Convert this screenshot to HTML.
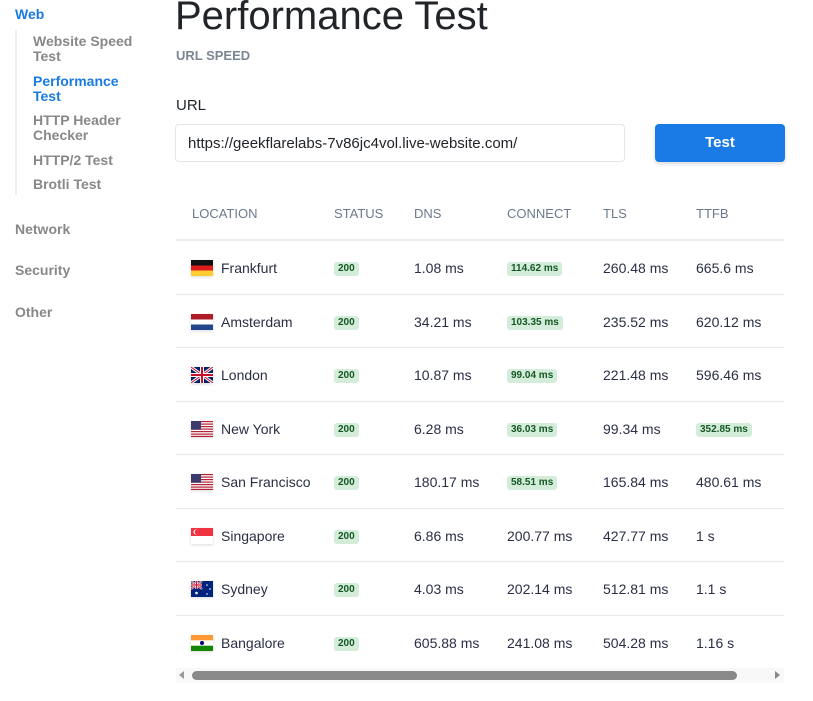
<!DOCTYPE html>
<html><head><meta charset="utf-8"><style>
*{box-sizing:border-box;margin:0;padding:0}
body{width:813px;height:701px;background:#fff;font-family:"Liberation Sans",sans-serif;color:#212529;position:relative;overflow:hidden}
.a{position:absolute;white-space:nowrap}
.sb{font-size:14px;font-weight:bold;color:#888;line-height:15px}
.badge{position:absolute;white-space:nowrap;background:#d4edda;color:#155724;font-weight:bold;font-size:10px;padding:2px 4px;border-radius:3px;line-height:10px}
.cell{font-size:14px;color:#2a2f45}
.hd{font-size:13px;color:#6c7a8c;font-weight:normal}
.line{position:absolute;left:176px;width:608px;height:1px;background:#e8e8e8}
.flag{position:absolute;left:191px;width:22px;height:16px;box-shadow:0 1px 3px rgba(0,0,0,.15)}
</style></head><body>
<div class="a" style="left:15px;top:6px;font-size:14px;font-weight:bold;color:#1a7be0">Web</div>
<div class="a" style="left:15px;top:30px;width:2px;height:165px;background:#eee"></div>
<div class="a sb" style="left:33px;top:34px">Website Speed<br>Test</div>
<div class="a sb" style="left:33px;top:74px;color:#1a7be0">Performance<br>Test</div>
<div class="a sb" style="left:33px;top:113px">HTTP Header<br>Checker</div>
<div class="a sb" style="left:33px;top:153px">HTTP/2 Test</div>
<div class="a sb" style="left:33px;top:177px">Brotli Test</div>
<div class="a sb" style="left:15px;top:222px">Network</div>
<div class="a sb" style="left:15px;top:263px">Security</div>
<div class="a sb" style="left:15px;top:305px">Other</div>

<div class="a" style="left:175px;top:-6px;font-size:40px;color:#212529">Performance Test</div>
<div class="a" style="left:176px;top:48px;font-size:13px;font-weight:bold;color:#7a8694">URL SPEED</div>
<div class="a" style="left:176px;top:97px;font-size:15px">URL</div>
<div class="a" style="left:175px;top:124px;width:450px;height:38px;border:1px solid #e6e6e6;border-radius:4px;font-size:15px;padding:10px 12px;color:#212529">https://geekflarelabs-7v86jc4vol.live-website.com/</div>
<div class="a" style="left:655px;top:124px;width:130px;height:38px;background:#1a7be6;border-radius:4px;color:#fff;font-weight:bold;font-size:15px;text-align:center;line-height:38px;box-shadow:0 2px 4px rgba(0,0,0,.15)">Test</div>

<div class="a hd" style="left:192px;top:206px">LOCATION</div>
<div class="a hd" style="left:334px;top:206px">STATUS</div>
<div class="a hd" style="left:414px;top:206px">DNS</div>
<div class="a hd" style="left:507px;top:206px">CONNECT</div>
<div class="a hd" style="left:603px;top:206px">TLS</div>
<div class="a hd" style="left:696px;top:206px">TTFB</div>
<div class="line" style="top:239px;height:2px;background:#eee"></div>

<div class="flag" style="top:260px;background:linear-gradient(#111 33%,#dd1c1c 33% 66%,#fc3 66%)"></div>
<div class="flag" style="top:314px;background:linear-gradient(#ae1c28 33%,#fff 33% 66%,#21468b 66%)"></div>
<svg class="flag" style="top:367px" viewBox="0 0 22 16"><rect width="22" height="16" fill="#012169"/><path d="M0 0L22 16M22 0L0 16" stroke="#fff" stroke-width="3"/><path d="M0 0L22 16M22 0L0 16" stroke="#c8102e" stroke-width="1"/><path d="M11 0V16M0 8H22" stroke="#fff" stroke-width="4"/><path d="M11 0V16M0 8H22" stroke="#c8102e" stroke-width="2"/></svg>
<svg class="flag" style="top:421px" viewBox="0 0 22 16"><rect width="22" height="16" fill="#fff"/><g fill="#b22234"><rect y="0" width="22" height="1.2"/><rect y="2.5" width="22" height="1.2"/><rect y="5" width="22" height="1.2"/><rect y="7.5" width="22" height="1.2"/><rect y="10" width="22" height="1.2"/><rect y="12.5" width="22" height="1.2"/><rect y="14.8" width="22" height="1.2"/></g><rect width="10" height="8.7" fill="#3c3b6e"/></svg>
<svg class="flag" style="top:474px" viewBox="0 0 22 16"><rect width="22" height="16" fill="#fff"/><g fill="#b22234"><rect y="0" width="22" height="1.2"/><rect y="2.5" width="22" height="1.2"/><rect y="5" width="22" height="1.2"/><rect y="7.5" width="22" height="1.2"/><rect y="10" width="22" height="1.2"/><rect y="12.5" width="22" height="1.2"/><rect y="14.8" width="22" height="1.2"/></g><rect width="10" height="8.7" fill="#3c3b6e"/></svg>
<svg class="flag" style="top:528px" viewBox="0 0 22 16"><rect width="22" height="16" fill="#fff"/><rect width="22" height="8" fill="#ef3340"/><circle cx="5" cy="4" r="2.5" fill="#fff"/><circle cx="6" cy="4" r="2.3" fill="#ef3340"/></svg>
<svg class="flag" style="top:581px" viewBox="0 0 22 16"><rect width="22" height="16" fill="#00247d"/><path d="M0 0L11 8M11 0L0 8" stroke="#fff" stroke-width="2"/><path d="M0 0L11 8M11 0L0 8" stroke="#cf142b" stroke-width=".8"/><path d="M5.5 0V8M0 4H11" stroke="#fff" stroke-width="2.4"/><path d="M5.5 0V8M0 4H11" stroke="#cf142b" stroke-width="1.2"/><circle cx="5.5" cy="12" r="1.3" fill="#fff"/><circle cx="16" cy="4" r=".8" fill="#fff"/><circle cx="19" cy="8" r=".8" fill="#fff"/><circle cx="16" cy="13" r=".8" fill="#fff"/></svg>
<svg class="flag" style="top:635px" viewBox="0 0 22 16"><rect width="22" height="16" fill="#fff"/><rect width="22" height="5.3" fill="#f93"/><rect y="10.7" width="22" height="5.3" fill="#138808"/><circle cx="11" cy="8" r="2" fill="#000080"/></svg>

<div class="line" style="top:294px"></div>
<div class="line" style="top:347px"></div>
<div class="line" style="top:401px"></div>
<div class="line" style="top:454px"></div>
<div class="line" style="top:508px"></div>
<div class="line" style="top:561px"></div>
<div class="line" style="top:615px"></div>

<div class="a cell" style="left:221px;top:260px">Frankfurt</div>
<div class="badge" style="left:334px;top:262px">200</div>
<div class="a cell" style="left:414px;top:260px">1.08 ms</div>
<div class="badge" style="left:507px;top:262px">114.62 ms</div>
<div class="a cell" style="left:603px;top:260px">260.48 ms</div>
<div class="a cell" style="left:696px;top:260px">665.6 ms</div>

<div class="a cell" style="left:221px;top:314px">Amsterdam</div>
<div class="badge" style="left:334px;top:316px">200</div>
<div class="a cell" style="left:414px;top:314px">34.21 ms</div>
<div class="badge" style="left:507px;top:316px">103.35 ms</div>
<div class="a cell" style="left:603px;top:314px">235.52 ms</div>
<div class="a cell" style="left:696px;top:314px">620.12 ms</div>

<div class="a cell" style="left:221px;top:367px">London</div>
<div class="badge" style="left:334px;top:369px">200</div>
<div class="a cell" style="left:414px;top:367px">10.87 ms</div>
<div class="badge" style="left:507px;top:369px">99.04 ms</div>
<div class="a cell" style="left:603px;top:367px">221.48 ms</div>
<div class="a cell" style="left:696px;top:367px">596.46 ms</div>

<div class="a cell" style="left:221px;top:421px">New York</div>
<div class="badge" style="left:334px;top:423px">200</div>
<div class="a cell" style="left:414px;top:421px">6.28 ms</div>
<div class="badge" style="left:507px;top:423px">36.03 ms</div>
<div class="a cell" style="left:603px;top:421px">99.34 ms</div>
<div class="badge" style="left:696px;top:423px">352.85 ms</div>

<div class="a cell" style="left:221px;top:474px">San Francisco</div>
<div class="badge" style="left:334px;top:476px">200</div>
<div class="a cell" style="left:414px;top:474px">180.17 ms</div>
<div class="badge" style="left:507px;top:476px">58.51 ms</div>
<div class="a cell" style="left:603px;top:474px">165.84 ms</div>
<div class="a cell" style="left:696px;top:474px">480.61 ms</div>

<div class="a cell" style="left:221px;top:528px">Singapore</div>
<div class="badge" style="left:334px;top:530px">200</div>
<div class="a cell" style="left:414px;top:528px">6.86 ms</div>
<div class="a cell" style="left:507px;top:528px">200.77 ms</div>
<div class="a cell" style="left:603px;top:528px">427.77 ms</div>
<div class="a cell" style="left:696px;top:528px">1 s</div>

<div class="a cell" style="left:221px;top:581px">Sydney</div>
<div class="badge" style="left:334px;top:583px">200</div>
<div class="a cell" style="left:414px;top:581px">4.03 ms</div>
<div class="a cell" style="left:507px;top:581px">202.14 ms</div>
<div class="a cell" style="left:603px;top:581px">512.81 ms</div>
<div class="a cell" style="left:696px;top:581px">1.1 s</div>

<div class="a cell" style="left:221px;top:635px">Bangalore</div>
<div class="badge" style="left:334px;top:637px">200</div>
<div class="a cell" style="left:414px;top:635px">605.88 ms</div>
<div class="a cell" style="left:507px;top:635px">241.08 ms</div>
<div class="a cell" style="left:603px;top:635px">504.28 ms</div>
<div class="a cell" style="left:696px;top:635px">1.16 s</div>

<div class="a" style="left:176px;top:668px;width:608px;height:15px;background:#f8f8f8"></div>
<div class="a" style="left:179px;top:671px;width:0;height:0;border-top:4px solid transparent;border-bottom:4px solid transparent;border-right:5px solid #999"></div>
<div class="a" style="left:775px;top:671px;width:0;height:0;border-top:4px solid transparent;border-bottom:4px solid transparent;border-left:5px solid #888"></div>
<div class="a" style="left:192px;top:671px;width:545px;height:9px;background:#8a8a8a;border-radius:5px"></div>
</body></html>
